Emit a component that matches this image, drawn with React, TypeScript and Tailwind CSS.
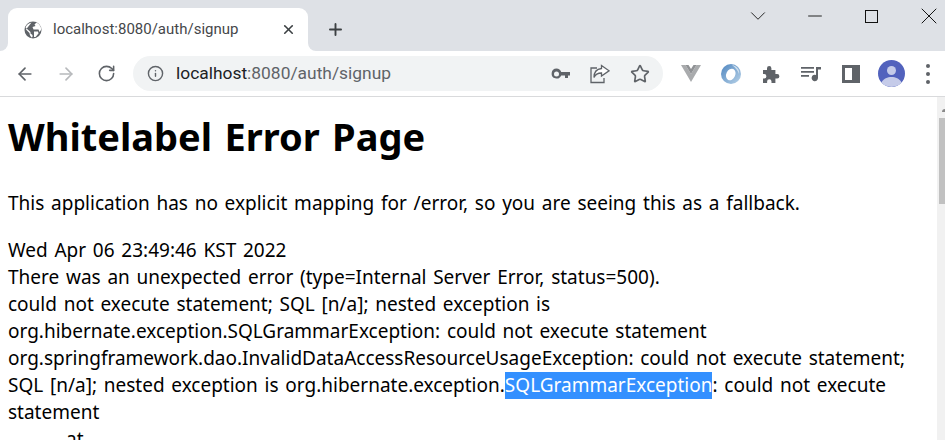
import React from 'react';
import { ArrowLeft, ArrowRight, RotateCw, Info, Star, Plus, X, Minus, ChevronDown } from 'lucide-react';

const Globe = () => (
  <svg width="18" height="18" viewBox="0 0 18 18">
    <circle cx="9" cy="9" r="8.500" fill="#5f6368" />
    <path d="M7.500 1.500c-3 .5-5 2.500-6 5l5 4.500v1.500l2 1.500V16l-1 .5c-1-1-2-3-2-4.500L2 8.500zM12 2l-1.500 1.500 1 1.500-3 1 1 2.500h5l1 2.500 1.500-2c.5-3-1-5.500-4.500-7.500z" fill="#fff" />
    <path d="M10 10.500h4l.5 2-3 3.500h-1.500z" fill="#fff" />
  </svg>
);

const KeyIcon = () => (
  <svg width="19" height="12" viewBox="0 0 19 12">
    <path d="M5.500 0.500a5 5 0 0 1 4.700 3.500H19v3.500h-2v2.500h-3V7.500h-3.800A5 5 0 1 1 5.500.5zm0 3a2 2 0 1 0 0 5 2 2 0 0 0 0-5z" fill="#5f6368" />
  </svg>
);

const ShareIcon = () => (
  <svg width="20" height="20" viewBox="0 0 20 20" fill="none" stroke="#5f6368" strokeWidth="1.300">
    <path d="M7 4H1v14.500h13V14" />
    <path d="M11.500 1.500L19 6.800l-7.500 5.200V9c-3.500 0-6 1-7.500 4.500 0-5.500 3-8.500 7.500-9z" fill="#fff" />
  </svg>
);

const VueIcon = () => (
  <svg width="20" height="17" viewBox="0 0 20 17">
    <path d="M0 0h4.500L10 9l5.500-9H20L10 17z" fill="#a9abad" />
    <path d="M4.500 0h3L10 4l2.500-4h3L10 9z" fill="#8f9194" />
  </svg>
);

const RingIcon = () => (
  <svg width="20" height="20" viewBox="0 0 20 20">
    <defs>
      <linearGradient id="ring" x1="0" y1="0" x2="1" y2="1">
        <stop offset="0" stopColor="#4f86c0" />
        <stop offset="1" stopColor="#b9d3e8" />
      </linearGradient>
    </defs>
    <circle cx="10" cy="10" r="10" fill="url(#ring)" />
    <ellipse cx="10" cy="10.500" rx="4.500" ry="6" transform="rotate(25 10 10)" fill="#fff" />
    <path d="M11 1c5 1 8 5 7 9-1-3-3-6-7-9z" fill="#cfe0ee" />
  </svg>
);

const PuzzleIcon = () => (
  <svg width="18" height="18" viewBox="0 0 18 18">
    <path d="M1 5h4V3.200a2.200 2.200 0 0 1 4.400 0V5h4v4h1.800a2.200 2.200 0 0 1 0 4.400H13.400V18H9.500v-1.500a2.200 2.200 0 0 0-4.400 0V18H1v-4.500h1.200a2.200 2.200 0 0 0 0-4.400H1z" fill="#5f6368" />
  </svg>
);

const QueueIcon = () => (
  <svg width="20" height="16" viewBox="0 0 20 16">
    <path d="M0 1h13v1.700H0zM0 5h13v1.700H0zM0 9h8v1.700H0z" fill="#5f6368" />
    <path d="M15 1h5v2.500h-3V12a3.200 3.200 0 1 1-2-3z" fill="#5f6368" />
  </svg>
);

const SidePanel = () => (
  <div className="w-[18px] h-[18px] bg-[#5f6368] flex p-[3px] pr-[8px]">
    <div className="flex-1 bg-white" />
  </div>
);

const Avatar = () => (
  <svg width="27" height="27" viewBox="0 0 27 27">
    <circle cx="13.500" cy="13.500" r="13.500" fill="#5262bd" />
    <circle cx="13.500" cy="10.500" r="4.500" fill="#c5cbe9" />
    <path d="M3.500 22.500c2-4 6-5.500 10-5.500s8 1.500 10 5.500a13.500 13.500 0 0 1-20 0z" fill="#c5cbe9" />
  </svg>
);

export default function App() {
  return (
    <div className="w-[945px] h-[440px] overflow-hidden flex flex-col bg-white font-['Open_Sans',sans-serif]">
      {/* tab strip */}
      <div className="h-[51px] shrink-0 bg-[#dee1e6] flex items-start">
        <div className="relative ml-[8px] mt-[8px] w-[300px] h-[43px] bg-white rounded-t-[9px] flex items-center pl-[16px] pr-[12px] shrink-0">
          {/* flared tab corners */}
          <div className="absolute left-[-8px] bottom-0 w-[8px] h-[8px] bg-white">
            <div className="w-full h-full bg-[#dee1e6] rounded-br-[8px]" />
          </div>
          <div className="absolute right-[-8px] bottom-0 w-[8px] h-[8px] bg-white">
            <div className="w-full h-full bg-[#dee1e6] rounded-bl-[8px]" />
          </div>
          <Globe />
          <span className="ml-[11px] text-[15px] text-[#45474a] flex-1 font-['Roboto',sans-serif]">localhost:8080/auth/signup</span>
          <X size={15} strokeWidth={2.6} color="#3c4043" />
        </div>
        <div className="ml-[18px] mt-[20px]">
          <Plus size={19} strokeWidth={2.4} color="#3c4043" />
        </div>
        <div className="ml-auto flex items-center mt-[3px] h-[26px]">
          <div className="w-[57px] flex justify-center"><ChevronDown size={26} strokeWidth={0.9} color="#222" /></div>
          <div className="w-[57px] flex justify-center"><Minus size={22} strokeWidth={1} color="#111" /></div>
          <div className="w-[57px] flex justify-center"><div className="w-[13px] h-[13px] border border-[#111]" /></div>
          <div className="w-[45px] pl-[13px] flex justify-center"><X size={28} strokeWidth={0.85} color="#111" /></div>
        </div>
      </div>

      {/* toolbar */}
      <div className="h-[46px] shrink-0 bg-white border-b border-[#d9dadc] flex items-center">
        <div className="ml-[15px] w-[50px]"><ArrowLeft size={20} strokeWidth={2} color="#5f6368" /></div>
        <div className="w-[30px] -ml-[9px]"><ArrowRight size={20} strokeWidth={2} color="#b7b9bc" /></div>
        <div className="ml-[11px]"><RotateCw size={19} strokeWidth={2} color="#5f6368" /></div>
        <div className="ml-[17px] w-[530px] h-[35px] rounded-full bg-[#f1f3f4] flex items-center pl-[14px] pr-[13px]">
          <Info size={17} strokeWidth={2} color="#5f6368" />
          <span className="ml-[12px] text-[17.400px] flex-1 text-[#5f6368] font-['Roboto',sans-serif]">
            <span className="text-[#202124]">localhost</span>:8080/auth/signup
          </span>
          <KeyIcon />
          <div className="ml-[20px]"><ShareIcon /></div>
          <div className="ml-[20px]"><Star size={20} strokeWidth={2} color="#5f6368" /></div>
        </div>
        <div className="ml-[18px]"><VueIcon /></div>
        <div className="ml-[20px]"><RingIcon /></div>
        <div className="ml-[21px]"><PuzzleIcon /></div>
        <div className="ml-[21px]"><QueueIcon /></div>
        <div className="ml-[21px]"><SidePanel /></div>
        <div className="ml-[18px]"><Avatar /></div>
        <div className="ml-[21px] flex flex-col gap-[4px]">
          <span className="w-[4px] h-[4px] rounded-full bg-[#5f6368]" />
          <span className="w-[4px] h-[4px] rounded-full bg-[#5f6368]" />
          <span className="w-[4px] h-[4px] rounded-full bg-[#5f6368]" />
        </div>
      </div>

      {/* page */}
      <div className="flex-1 min-h-0 flex">
        <div className="flex-1 min-w-0 pl-[8px] text-black whitespace-nowrap font-['Noto_Sans',sans-serif]">
          <h1 className="text-[38px] font-bold leading-[53px] mt-[13px] [word-spacing:2.500px]">Whitelabel Error Page</h1>
          <div className="text-[19px] leading-[27px] [word-spacing:1.800px]">
            <p className="mt-[27px]">This application has no explicit mapping for /error, so you are seeing this as a fallback.</p>
            <div className="mt-[20px]">
              <div>Wed Apr 06 23:49:46 KST 2022</div>
              <div>There was an unexpected error (type=Internal Server Error, status=500).</div>
              <div>could not execute statement; SQL [n/a]; nested exception is</div>
              <div>org.hibernate.exception.SQLGrammarException: could not execute statement</div>
              <div>org.springframework.dao.InvalidDataAccessResourceUsageException: could not execute statement;</div>
              <div>SQL [n/a]; nested exception is org.hibernate.exception.<span className="inline-block h-[27px] bg-[#3390ff] text-white">SQLGrammarException</span>: could not execute</div>
              <div>statement</div>
              <div className="pl-[58px]">at</div>
            </div>
          </div>
        </div>
        {/* scrollbar */}
        <div className="w-[8px] shrink-0 bg-[#f1f1f1] flex flex-col">
          <div className="h-[21px] flex justify-end items-center pt-[6px]">
            <div className="w-[3px] h-[3px] bg-[#8a8a8a] rounded-tl-[3px]" />
          </div>
          <div className="h-[86px] bg-[#c1c1c1] ml-[2px]" />
        </div>
      </div>
    </div>
  );
}
